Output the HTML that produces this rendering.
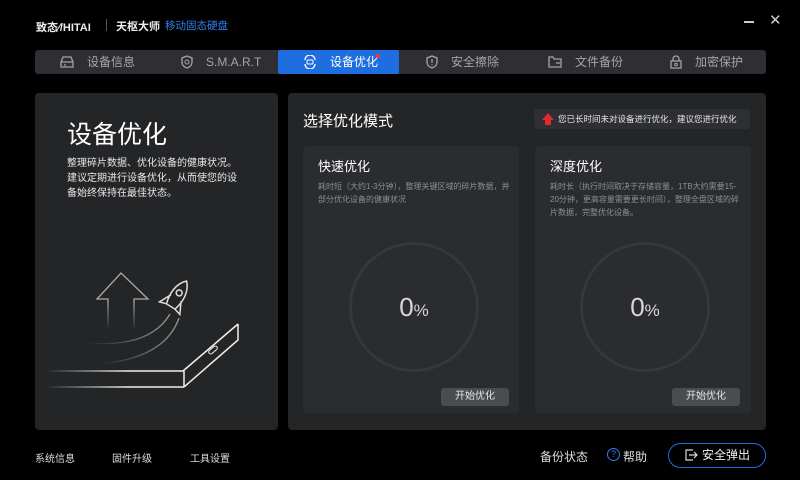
<!DOCTYPE html>
<html><head><meta charset="utf-8"><style>
*{margin:0;padding:0;box-sizing:border-box}
body{width:800px;height:480px;background:#000;font-family:"Liberation Sans","Noto Sans CJK SC",sans-serif;color:#fff;position:relative;overflow:hidden}
.a{position:absolute}
.tabs{left:35px;top:50px;width:731px;height:24px;background:#2e2f33;border-radius:3px}
.tab{position:absolute;top:0;height:24px;line-height:24px;font-size:12px;color:#a3a5aa;display:flex;align-items:center}
.tab svg{margin-right:13px}
.panel{background:#242527;border-radius:4px}
.card{background:#2b2c2f;border-radius:4px;position:absolute}
.btn{position:absolute;width:68px;height:18px;background:#4a4c51;border-radius:3px;font-size:10px;line-height:18px;text-align:center;color:#e6e6e6}
.circ{position:absolute;width:130px;height:130px;border:3px solid #36373b;border-radius:50%;text-align:center;line-height:124px;font-size:26px;color:#d8d8d8}
.circ span{font-size:17px}
.desc{font-size:8px;color:#8d8f93;line-height:13px}
</style></head><body>
<div class="a" style="left:36px;top:19px;font-size:11px;font-weight:bold;color:#eee">致态⁄/HITAI</div>
<div class="a" style="left:106px;top:19px;width:1px;height:12px;background:#555"></div>
<div class="a" style="left:116px;top:18px;font-size:11px;font-weight:bold;color:#eee">天枢大师</div>
<div class="a" style="left:165px;top:18px;font-size:10.5px;color:#2f7ff0">移动固态硬盘</div>
<div class="a" style="left:744px;top:21px;width:10px;height:1.5px;background:#ccc"></div>
<div class="a" style="left:769px;top:11px;font-size:15px;color:#ccc">✕</div>

<div class="a tabs">
 <div class="tab" style="left:25px"><svg width="14" height="12" viewBox="0 0 14 12"><path d="M3 1h8l2 5v5H1V6z M1 6h12 M4 9h2" fill="none" stroke="#a3a5aa" stroke-width="1.3"/></svg>设备信息</div>
 <div class="tab" style="left:146px"><svg width="12" height="14" viewBox="0 0 12 14"><path d="M6 1l5 2v4c0 3-2 5-5 6C3 12 1 10 1 7V3z" fill="none" stroke="#a3a5aa" stroke-width="1.3"/><circle cx="6" cy="7" r="2" fill="none" stroke="#a3a5aa"/></svg>S.M.A.R.T</div>
 <div class="tab" style="left:243px;width:121px;background:#1f6ee0;color:#fff;border-radius:2px;padding-left:25px"><svg width="14" height="14" viewBox="0 0 14 14"><path d="M2 5a5 5 0 0 1 10 0M12 9a5 5 0 0 1-10 0" fill="none" stroke="#fff" stroke-width="1.3"/><rect x="4" y="5" width="6" height="4" rx="1" fill="none" stroke="#fff"/></svg>设备优化<span style="position:absolute;left:98px;top:4px;width:4px;height:4px;background:#f33;border-radius:50%"></span></div>
 <div class="tab" style="left:391px"><svg width="12" height="14" viewBox="0 0 12 14"><path d="M6 1l5 2v4c0 3-2 5-5 6C3 12 1 10 1 7V3z M6 4v4M6 9.5v1" fill="none" stroke="#a3a5aa" stroke-width="1.3"/></svg>安全擦除</div>
 <div class="tab" style="left:513px"><svg width="14" height="12" viewBox="0 0 14 12"><path d="M1 1h4l1 2h7v8H1z M8 7h4" fill="none" stroke="#a3a5aa" stroke-width="1.3"/></svg>文件备份</div>
 <div class="tab" style="left:635px"><svg width="12" height="14" viewBox="0 0 12 14"><path d="M3 6V4a3 3 0 0 1 6 0v2M1 6h10v7H1z" fill="none" stroke="#a3a5aa" stroke-width="1.3"/><circle cx="6" cy="9.5" r="1.3" fill="none" stroke="#a3a5aa"/></svg>加密保护</div>
</div>

<div class="a panel" style="left:35px;top:93px;width:243px;height:337px">
 <div class="a" style="left:32px;top:22px;font-size:25px;color:#fff">设备优化</div>
 <div class="a" style="left:32px;top:63px;font-size:10px;line-height:15px;color:#e8e8e8;width:172px">整理碎片数据、优化设备的健康状况。建议定期进行设备优化，从而使您的设备始终保持在最佳状态。</div>
 <svg class="a" style="left:0;top:0" width="243" height="337" viewBox="35 93 243 337">
  <defs>
   <linearGradient id="gv" x1="0" y1="0" x2="0" y2="1"><stop offset="0.5" stop-color="#aaa"/><stop offset="1" stop-color="#aaa" stop-opacity="0"/></linearGradient>
   <linearGradient id="gh" x1="0" y1="0" x2="1" y2="0"><stop offset="0" stop-color="#eee" stop-opacity="0"/><stop offset="0.6" stop-color="#eee"/></linearGradient>
   <linearGradient id="gc" x1="0" y1="0" x2="1" y2="0"><stop offset="0" stop-color="#888" stop-opacity="0"/><stop offset="1" stop-color="#999"/></linearGradient>
  </defs>
  <path d="M108 330V299H97L121 273L148 299H134V330" fill="none" stroke="url(#gv)" stroke-width="1.3"/>
  <path d="M88 343Q150 348 170 314" fill="none" stroke="url(#gc)" stroke-width="1.3"/>
  <path d="M100 364Q165 358 179 318" fill="none" stroke="url(#gc)" stroke-width="1.3"/>
  <g transform="translate(176,298) rotate(32)" fill="none" stroke="#ddd" stroke-width="1.5">
   <path d="M0,-20C8,-12 8,0 5,10L-5,10C-8,0 -8,-12 0,-20Z M-6,0L-12,12L-5,10 M6,0L12,12L5,10"/>
   <circle cx="0" cy="-6" r="3"/>
  </g>
  <path d="M182 324H238" fill="none" stroke="url(#gh)" stroke-width="1.5"/>
  <path d="M238 324L183 371 M238 324V340L184 387 M184 371V387" fill="none" stroke="#eee" stroke-width="1.5"/>
  <path d="M45 371H184 M45 387H184" fill="none" stroke="url(#gh)" stroke-width="1.5"/>
  <rect x="208" y="348" width="10" height="4" rx="2" fill="none" stroke="#eee" transform="rotate(-40 213 350)"/>
 </svg>
</div>

<div class="a panel" style="left:288px;top:93px;width:478px;height:337px">
 <div class="a" style="left:15px;top:17px;font-size:15px">选择优化模式</div>
 <div class="a" style="left:246px;top:16px;width:216px;height:20px;background:#2e2f32;border-radius:3px;font-size:8.5px;line-height:20px;padding-left:24px;color:#e8e8e8">您已长时间未对设备进行优化，建议您进行优化<span style="position:absolute;left:8px;top:4px;width:0;height:0;border-left:6px solid transparent;border-right:6px solid transparent;border-bottom:7px solid #e5282d"></span><span style="position:absolute;left:11px;top:11px;width:6px;height:5px;background:#e5282d"></span></div>
 <div class="card" style="left:15px;top:53px;width:216px;height:267px">
  <div class="a" style="left:15px;top:10px;font-size:13px">快速优化</div>
  <div class="a desc" style="left:15px;top:34px;width:192px">耗时短（大约1-3分钟），整理关键区域的碎片数据，并部分优化设备的健康状况</div>
  <div class="circ" style="left:46px;top:96px">0<span>%</span></div>
  <div class="btn" style="left:138px;top:242px">开始优化</div>
 </div>
 <div class="card" style="left:247px;top:53px;width:216px;height:267px">
  <div class="a" style="left:15px;top:10px;font-size:13px">深度优化</div>
  <div class="a desc" style="left:15px;top:34px;width:192px">耗时长（执行时间取决于存储容量，1TB大约需要15-20分钟，更高容量需要更长时间），整理全盘区域的碎片数据，完整优化设备。</div>
  <div class="circ" style="left:45px;top:96px">0<span>%</span></div>
  <div class="btn" style="left:137px;top:242px">开始优化</div>
 </div>
</div>

<div class="a" style="left:35px;top:450px;font-size:10px;color:#ddd">系统信息</div>
<div class="a" style="left:112px;top:450px;font-size:10px;color:#ddd">固件升级</div>
<div class="a" style="left:190px;top:450px;font-size:10px;color:#ddd">工具设置</div>
<div class="a" style="left:540px;top:448px;font-size:12px;color:#ddd">备份状态</div>
<div class="a" style="left:607px;top:448px;width:13px;height:13px;border:1.3px solid #2f7ff0;border-radius:50%;font-size:9px;line-height:11px;text-align:center;color:#2f7ff0">?</div>
<div class="a" style="left:623px;top:448px;font-size:12px;color:#ddd">帮助</div>
<div class="a" style="left:668px;top:443px;width:98px;height:25px;border:1.5px solid #1f6ee0;border-radius:13px;font-size:12px;line-height:22px;color:#eee;padding-left:33px">安全弹出<svg style="position:absolute;left:16px;top:5px" width="13" height="12" viewBox="0 0 13 12"><path d="M8 1H1v10h7M4 6h8M9 3l3 3-3 3" fill="none" stroke="#ddd" stroke-width="1.2"/></svg></div>
</body></html>
